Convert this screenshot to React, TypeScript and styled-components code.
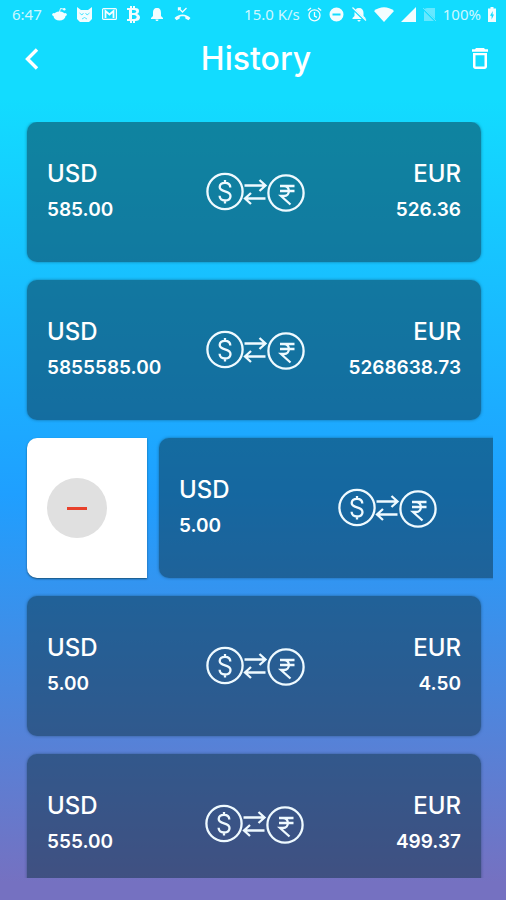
import React from "react";
import styled, { createGlobalStyle, css } from "styled-components";

const Global = createGlobalStyle`
  * { box-sizing: border-box; }
  html, body, #root { height: 100%; }
  body {
    margin: 0;
    color: #fff;
    font-family: Inter, "Noto Sans", sans-serif;
  }
  button {
    display: flex;
    padding: 0;
    border: 0;
    color: inherit;
    background: none;
    cursor: pointer;
  }
`;

const Screen = styled.div`
  display: flex;
  flex-direction: column;
  height: 100vh;
  padding-bottom: 22px;
  overflow: hidden;
  background: linear-gradient(#12dcff 0%, #12dcff 11%, #1f9fff 55%, #7571c1 98%);
`;

const StatusBar = styled.div`
  display: flex;
  justify-content: space-between;
  height: 28px;
  padding: 0 10px 0 12px;
  font-family: "Noto Sans", sans-serif;
  font-size: 15px;
  line-height: 28px;
  color: rgba(255, 255, 255, 0.8);
`;

const StatusGroup = styled.div<{ $gap: number }>`
  display: flex;
  align-items: center;
  gap: ${(p) => p.$gap}px;
`;

const Glyph = styled.svg<{ $faint?: boolean }>`
  display: block;
  flex: none;
  fill: #fff;
  opacity: ${(p) => (p.$faint ? 0.35 : 0.95)};
`;

const Header = styled.header`
  display: grid;
  grid-template-columns: 32px 1fr 32px;
  align-items: center;
  height: 62px;
  padding: 0 10px 0 16px;
`;

const Title = styled.h1`
  margin: 0;
  font-size: 32px;
  font-weight: 500;
  line-height: 40px;
  text-align: center;
`;

const IconButton = styled.button`
  align-items: center;
  justify-content: center;
  height: 32px;
`;

const List = styled.ul`
  flex: 1;
  display: flex;
  flex-direction: column;
  gap: 18px;
  min-height: 0;
  margin: 32px 13px 0;
  padding: 0 12px 0 14px;
  overflow: hidden;
  list-style: none;
`;

const Item = styled.li`
  display: flex;
  flex: none;
  gap: 12px;
  height: 140px;
`;

const Card = styled.article`
  display: flex;
  flex: none;
  align-items: center;
  justify-content: space-between;
  width: 100%;
  padding: 0 20px;
  border-radius: 10px;
  background: rgba(12, 48, 66, 0.5);
  box-shadow: 0 0 3px rgba(12, 48, 66, 0.5);
`;

const Remove = styled.button`
  && {
    flex: none;
    align-items: center;
    width: 120px;
    padding-left: 20px;
    border-radius: 10px 0 0 10px;
    background: #fff;
    box-shadow: 0 1px 2px rgba(12, 48, 66, 0.7);
  }
`;

const RemoveDisc = styled.span`
  display: grid;
  place-items: center;
  width: 60px;
  height: 60px;
  border-radius: 50%;
  background: #e0e0e0;
`;

const Dash = styled.span`
  width: 20px;
  height: 3px;
  background: #e8412c;
`;

const Amount = styled.div<{ $end?: boolean; $hidden?: boolean }>`
  display: flex;
  flex-direction: column;
  gap: 8px;
  visibility: ${(p) => (p.$hidden ? "hidden" : "visible")};
  ${(p) => p.$end && css`text-align: right;`}
`;

const Currency = styled.span`
  font-size: 24px;
  font-weight: 500;
  line-height: 28px;
`;

const Value = styled.span`
  font-size: 19px;
  font-weight: 600;
  line-height: 28px;
`;

const Exchange = () => (
  <svg width="100" height="40" viewBox="0 0 100 40" fill="none" stroke="#effaff" strokeWidth="2.300" aria-hidden="true">
    <circle cx="20" cy="19.500" r="17.600" />
    <circle cx="81" cy="21" r="17.600" />
    <path d="M25.300 15.500c0-3-2-4.700-5.300-4.700s-5.300 1.700-5.300 4.200c0 5.800 10.800 3 10.800 9 0 3-2.500 4.500-5.500 4.500s-5.400-1.700-5.400-4.700M20 8v3.500M20 28v3.500" />
    <path d="M39.500 13.500H60M54.500 8l6 5.500-6 5.500M60.500 26.500H40M46 21l-6 5.500 6 5.500" />
    <path d="M75 14h14.500M75 19h14.500M75 14h4c6.500 0 6.500 10 0 10h-3l9.500 8.500" />
  </svg>
);

type Entry = { from: string; to: string; open?: boolean };

const entries: Entry[] = [
  { from: "585.00", to: "526.36" },
  { from: "5855585.00", to: "5268638.73" },
  { from: "5.00", to: "4.50", open: true },
  { from: "5.00", to: "4.50" },
  { from: "555.00", to: "499.37" },
];

export default function App() {
  return (
    <Screen>
      <Global />
      <StatusBar>
        <StatusGroup $gap={10}>
          <span>6:47</span>
          <Glyph width="15" height="14" viewBox="0 0 15 14">
            <ellipse cx="7.500" cy="9" rx="6" ry="4.500" />
            <circle cx="1.800" cy="7.500" r="1.600" />
            <circle cx="13.200" cy="7.500" r="1.600" />
            <path d="M7.500 5l1-3.500 3.500.7" fill="none" stroke="#fff" />
            <circle cx="12.300" cy="2.300" r="1.200" />
          </Glyph>
          <Glyph width="15" height="15" viewBox="0 0 15 15">
            <path d="M0 0l4 3h7l4-3v12l-3 3H3l-3-3z" />
            <path d="M2.500 6l2.500 2 1.500-2M8.500 6L10 8l2.500-2M5 12l2.500-1.500L10 12" fill="none" stroke="#12dcff" strokeWidth=".7" />
          </Glyph>
          <Glyph width="15" height="12" viewBox="0 0 15 12">
            <rect x=".6" y=".6" width="13.800" height="10.800" rx="1" fill="none" stroke="#fff" strokeWidth="1.200" />
            <path d="M3.500 10V3l4 3.500 4-3.500v7" fill="none" stroke="#fff" strokeWidth="1.800" />
          </Glyph>
          <Glyph width="13" height="17" viewBox="0 0 13 17">
            <path fillRule="evenodd" d="M0 2h3V0h2v2h1V0h2v2c3 0 4 1 4 3 0 1.500-.8 2.500-2 3 1.800.4 3 1.500 3 3.500 0 2.500-2 3.500-5 3.500v2H6v-2H5v2H3v-2H0v-2h2V4H0zM5 4v3h2c3 0 3-3 0-3zM5 9v4h2c3.500 0 3.500-4 0-4z" />
          </Glyph>
          <Glyph width="14" height="14" viewBox="0 0 14 14">
            <path d="M7 1c3 0 4 2 4 5v3l2 2v1H1v-1l2-2V6c0-3 1-5 4-5zM5.500 12.500h3c0 2-3 2-3 0z" />
          </Glyph>
          <Glyph width="17" height="14" viewBox="0 0 17 14">
            <path d="M4.500 1l4 4 4-4M4.500 3.500V1H7" fill="none" stroke="#fff" strokeWidth="1.300" />
            <path d="M.5 11c4.500-4.700 11.500-4.700 16 0l-2 2.200-3.200-1.800V9.700c-2-.6-3.600-.6-5.600 0v1.700l-3.200 1.800z" />
          </Glyph>
        </StatusGroup>
        <StatusGroup $gap={7}>
          <span>15.0 K/s</span>
          <Glyph width="15" height="15" viewBox="0 0 15 15">
            <g fill="none" stroke="#fff" strokeWidth="1.300">
              <circle cx="7.500" cy="8.300" r="5.500" />
              <path d="M7.500 5v4l2.500 1.300M.8 3.500L4 1M14.200 3.500L11 1" />
            </g>
          </Glyph>
          <Glyph width="15" height="15" viewBox="0 0 15 15">
            <path fillRule="evenodd" d="M7.500.5a7 7 0 1 0 0 14 7 7 0 0 0 0-14zM3.500 6.500h8v2h-8z" />
          </Glyph>
          <Glyph width="16" height="15" viewBox="0 0 16 15">
            <path d="M8 1c3 0 4.500 2 4.500 5v3l2 2v1h-13v-1l2-2V6C3.500 3 5 1 8 1zM6.500 13h3c0 2-3 2-3 0z" />
            <path d="M1 1l14 13.500" stroke="#12dcff" strokeWidth="2.400" />
            <path d="M1.500.5l13.500 13" stroke="#fff" strokeWidth="1.200" />
          </Glyph>
          <Glyph width="20" height="15" viewBox="0 0 20 15">
            <path d="M0 4c6-5 14-5 20 0L10 15z" />
          </Glyph>
          <Glyph width="15" height="15" viewBox="0 0 15 15">
            <path d="M15 0v15H0z" />
          </Glyph>
          <Glyph $faint width="13" height="15" viewBox="0 0 13 15">
            <path d="M4 1h8v11L1 2M1 4v10h10z" />
            <path d="M0 1l13 13" stroke="#fff" />
          </Glyph>
          <span>100%</span>
          <Glyph width="8" height="15" viewBox="0 0 8 15">
            <path fillRule="evenodd" d="M2.500 0h3v1.500H8V15H0V1.500h2.500zM4.800 4L2 8.800h1.600V12.500L6 7.500H4.500z" />
          </Glyph>
        </StatusGroup>
      </StatusBar>
      <Header>
        <IconButton aria-label="Back">
          <svg width="16" height="24" viewBox="0 0 16 24" fill="none" stroke="#fff" strokeWidth="3.400">
            <path d="M13 2.500L3.500 12l9.500 9.500" />
          </svg>
        </IconButton>
        <Title>History</Title>
        <IconButton aria-label="Clear history">
          <svg width="18" height="22" viewBox="0 0 18 22" fill="#fff">
            <path fillRule="evenodd" d="M5 0h8l1 1.300h3v2.400H1V1.300h3zM2 5h14v13.500c0 1.500-1 2.500-2.500 2.500h-9C3 21 2 20 2 18.500zM4.500 7.300v11.200h9V7.300z" />
          </svg>
        </IconButton>
      </Header>
      <List>
        {entries.map((e, i) => (
          <Item key={i}>
            {e.open && (
              <Remove aria-label="Remove entry">
                <RemoveDisc>
                  <Dash />
                </RemoveDisc>
              </Remove>
            )}
            <Card>
              <Amount>
                <Currency>USD</Currency>
                <Value>{e.from}</Value>
              </Amount>
              <Exchange />
              <Amount $end $hidden={e.open}>
                <Currency>EUR</Currency>
                <Value>{e.to}</Value>
              </Amount>
            </Card>
          </Item>
        ))}
      </List>
    </Screen>
  );
}
